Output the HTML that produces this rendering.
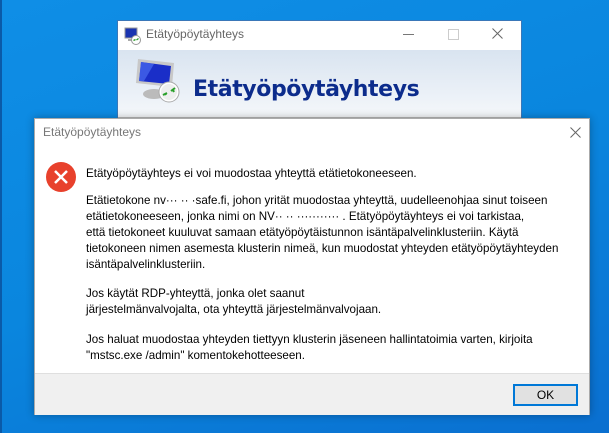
<!DOCTYPE html>
<html><head><meta charset="utf-8"><style>
body{margin:0;width:609px;height:433px;overflow:hidden;position:relative;font-family:"Segoe UI","Liberation Sans",sans-serif;
background:linear-gradient(160deg,#0f8ee6 0%,#0a86de 50%,#0a6fd0 100%);}
.abs{position:absolute}
.t{position:absolute;left:86px;font-size:11.6px;color:#000;white-space:nowrap;line-height:16px}
</style></head><body>
<div class="abs" style="left:0;top:0;width:2px;height:433px;background:#0a5aa8"></div>
<div class="abs" style="left:117px;top:20px;width:405px;height:110px;background:#fff;border:1px solid #3a77b8;box-sizing:border-box"></div>
<div class="abs" style="left:118px;top:50px;width:403px;height:70px;background:linear-gradient(#d9e4f0,#edf2f8 70%,#f6f8fa)"></div>
<div class="abs" style="left:118px;top:117px;width:403px;height:2px;background:#b8b8b8"></div>
<svg class="abs" style="left:124px;top:27px" width="18" height="18" viewBox="0 0 18 18"><rect x="1" y="1" width="12" height="10" fill="#1a34b0" stroke="#999"/><rect x="4" y="12" width="6" height="2" fill="#aaa"/><circle cx="12" cy="13" r="4.5" fill="#fff" stroke="#999"/><path d="M9.5 13.5l2-1M12.5 13l2-1.5" stroke="#2a9a2a" stroke-width="1.3"/></svg>
<div class="abs" style="left:146px;top:27px;font-size:12px;color:#666">Etätyöpöytäyhteys</div>
<div class="abs" style="left:403px;top:34px;width:11px;height:1px;background:#777"></div>
<div class="abs" style="left:448px;top:29px;width:9px;height:9px;border:1px solid #ccc"></div>
<svg class="abs" style="left:492px;top:28px" width="11" height="11"><path d="M0.5 0.5L10.5 10.5M10.5 0.5L0.5 10.5" stroke="#666" stroke-width="1"/></svg>
<svg class="abs" style="left:134px;top:57px" width="50" height="50" viewBox="0 0 50 50">
<polygon points="4,2 40,6 38,30 2,26" fill="#c8c8c8"/><polygon points="7,5 37,9 35,27 5,24" fill="#1a2ec8"/><polygon points="7,5 20,7 10,24 5,24" fill="#4a6cf0" opacity=".7"/>
<ellipse cx="20" cy="37" rx="11" ry="5" fill="#bbb"/><circle cx="35" cy="35" r="10" fill="#fff" stroke="#aaa"/><circle cx="35" cy="35" r="8" fill="#eee"/>
<path d="M29 38l4-2M37 34l4-3M31 36l1 2M39 33l1 2" stroke="#2aa02a" stroke-width="2"/></svg>
<div class="abs" style="left:193px;top:77px;font-size:22px;font-weight:bold;color:#0c2c8c;font-family:'DejaVu Sans','Liberation Sans',sans-serif;letter-spacing:-0.4px">Etätyöpöytäyhteys</div>
<div class="abs" style="left:34px;top:118px;width:556px;height:297px;background:#fff;border:1px solid #aaa;box-sizing:border-box;box-shadow:0 0 8px rgba(0,0,0,.3)"></div>
<div class="abs" style="left:35px;top:373px;width:554px;height:41px;background:#f0f0f0;border-top:1px solid #dfdfdf"></div>
<div class="abs" style="left:43px;top:125px;font-size:12px;color:#777">Etätyöpöytäyhteys</div>
<svg class="abs" style="left:570px;top:127px" width="11" height="11"><path d="M0.5 0.5L10.5 10.5M10.5 0.5L0.5 10.5" stroke="#666" stroke-width="1"/></svg>
<svg class="abs" style="left:45px;top:161px" width="32" height="32" viewBox="0 0 32 32"><circle cx="16" cy="16" r="15" fill="#e8412c"/><path d="M10 10L22 22M22 10L10 22" stroke="#fff" stroke-width="2.5"/></svg>
<div class="t" style="top:166px">Etätyöpöytäyhteys ei voi muodostaa yhteyttä etätietokoneeseen.</div>
<div class="t" style="top:193px">Etätietokone nv··· ·· ·safe.fi, johon yrität muodostaa yhteyttä, uudelleenohjaa sinut toiseen</div>
<div class="t" style="top:209px">etätietokoneeseen, jonka nimi on NV·· ·· ··········· . Etätyöpöytäyhteys ei voi tarkistaa,</div>
<div class="t" style="top:225px">että tietokoneet kuuluvat samaan etätyöpöytäistunnon isäntäpalvelinklusteriin. Käytä</div>
<div class="t" style="top:241px">tietokoneen nimen asemesta klusterin nimeä, kun muodostat yhteyden etätyöpöytäyhteyden</div>
<div class="t" style="top:257px">isäntäpalvelinklusteriin.</div>
<div class="t" style="top:286px">Jos käytät RDP-yhteyttä, jonka olet saanut</div>
<div class="t" style="top:302px">järjestelmänvalvojalta, ota yhteyttä järjestelmänvalvojaan.</div>
<div class="t" style="top:332px">Jos haluat muodostaa yhteyden tiettyyn klusterin jäseneen hallintatoimia varten, kirjoita</div>
<div class="t" style="top:348px">"mstsc.exe /admin" komentokehotteeseen.</div>
<div class="abs" style="left:513px;top:384px;width:65px;height:22px;box-sizing:border-box;border:2px solid #0078d7;background:#e1e1e1;font-size:12px;text-align:center;line-height:18px">OK</div>
</body></html>
